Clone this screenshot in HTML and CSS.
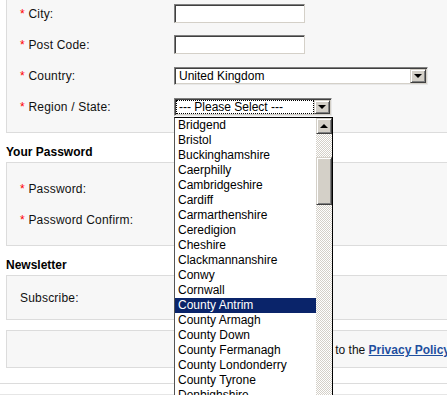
FILE: index.html
```html
<!DOCTYPE html>
<html lang="en">
<head>
    <meta charset="UTF-8">
    <title>Account Register</title>
    <link rel="stylesheet" href="styles.css">
</head>
<body>
    <div class="form">
        <!-- Address (top cut off) -->
        <div class="box box-first">
            <div class="row">
                <span class="label"><span class="req">*</span> City:</span>
                <input type="text" class="text">
            </div>
            <div class="row">
                <span class="label"><span class="req">*</span> Post Code:</span>
                <input type="text" class="text">
            </div>
            <div class="row">
                <span class="label"><span class="req">*</span> Country:</span>
                <div class="select select-wide">
                    <span class="value">United Kingdom</span>
                    <span class="arrow"><span class="tri-down"></span></span>
                </div>
            </div>
            <div class="row">
                <span class="label"><span class="req">*</span> Region / State:</span>
                <div class="select select-narrow">
                    <span class="value focused">--- Please Select ---</span>
                    <span class="arrow"><span class="tri-down"></span></span>

                    <div class="dropdown">
                        <ul class="options">
                            <li>Bridgend</li>
                            <li>Bristol</li>
                            <li>Buckinghamshire</li>
                            <li>Caerphilly</li>
                            <li>Cambridgeshire</li>
                            <li>Cardiff</li>
                            <li>Carmarthenshire</li>
                            <li>Ceredigion</li>
                            <li>Cheshire</li>
                            <li>Clackmannanshire</li>
                            <li>Conwy</li>
                            <li>Cornwall</li>
                            <li class="selected">County Antrim</li>
                            <li>County Armagh</li>
                            <li>County Down</li>
                            <li>County Fermanagh</li>
                            <li>County Londonderry</li>
                            <li>County Tyrone</li>
                            <li>Denbighshire</li>
                            <li>Derbyshire</li>
                        </ul>
                        <div class="scrollbar">
                            <span class="sb-btn"><span class="tri-up"></span></span>
                            <span class="sb-track sb-track-top"></span>
                            <span class="sb-thumb"></span>
                            <span class="sb-track sb-track-rest"></span>
                            <span class="sb-btn"><span class="tri-down"></span></span>
                        </div>
                    </div>
                </div>
            </div>
        </div>

        <h2>Your Password</h2>
        <div class="box box-pass">
            <div class="row">
                <span class="label"><span class="req">*</span> Password:</span>
                <input type="password" class="text">
            </div>
            <div class="row">
                <span class="label"><span class="req">*</span> Password Confirm:</span>
                <input type="password" class="text">
            </div>
        </div>

        <h2>Newsletter</h2>
        <div class="box box-news">
            <div class="row">
                <span class="label">Subscribe:</span>
            </div>
        </div>

        <div class="box box-agree">
            I have read and agree to the <a href="#" class="policy">Privacy Policy</a>
        </div>
    </div>

    <div class="buttons"></div>
</body>
</html>
```

FILE: styles.css
```css
/* Basic reset */
html {
    overflow: hidden;
}

body {
    margin: 0;
    background: #fff;
    font-family: 'Liberation Sans', Arial, sans-serif;
    font-size: 12px;
    color: #111;
}

.form {
    margin-left: 6px;
    width: 480px;
}

/* Grey field boxes */
.box {
    background: #f7f7f7;
    border: 1px solid #dcdcdc;
    padding: 10px 0 10px 13px;
}

.box-first {
    margin-top: -3px;
    padding-top: 0;
}

.box-news {
    padding-top: 6px;
    padding-bottom: 6px;
}

.box-agree {
    margin-top: 10px;
    padding: 12px 35px 10px 0;
    line-height: 14px;
    text-align: right;
    white-space: nowrap;
}

.policy {
    color: #1f4f9f;
    font-weight: bold;
    text-decoration: underline;
}

h2 {
    margin: 0;
    padding: 12px 0 3px;
    font-size: 12px;
    line-height: 14px;
    font-weight: bold;
    color: #000;
}

/* Rows */
.row {
    display: flex;
    align-items: center;
    height: 31px;
}

.label {
    width: 154px;
    flex-shrink: 0;
    letter-spacing: 0.2px;
}

.req {
    color: #f00;
}

/* Win2000 style inputs */
.text {
    box-sizing: border-box;
    width: 131px;
    height: 19px;
    margin: 0;
    padding: 0 2px;
    background: #fff;
    border: 1px solid;
    border-color: #7f7f7f #d4d0c8 #d4d0c8 #7f7f7f;
    box-shadow: inset 1px 1px 0 #404040;
    font: inherit;
}

.select {
    position: relative;
    box-sizing: border-box;
    height: 18px;
    display: flex;
    align-items: stretch;
    background: #fff;
    border: 1px solid;
    border-color: #7f7f7f #e8e8e8 #e8e8e8 #7f7f7f;
    box-shadow: inset 1px 1px 0 #404040, inset -1px -1px 0 #d4d0c8;
    padding: 1px 1px 1px 1px;
}

.select-wide {
    width: 254px;
}

.select-narrow {
    width: 158px;
}

.select .value {
    flex: 1;
    padding-left: 3px;
    line-height: 14px;
    color: #000;
}

.select .value.focused {
    padding-left: 2px;
    border: 1px dotted #000;
    line-height: 12px;
}

.select .arrow,
.sb-btn {
    box-sizing: border-box;
    width: 16px;
    display: flex;
    align-items: center;
    justify-content: center;
    background: #d4d0c8;
    border: 1px solid;
    border-color: #d4d0c8 #404040 #404040 #d4d0c8;
    box-shadow: inset 1px 1px 0 #fff, inset -1px -1px 0 #808080;
}

.tri-down {
    width: 0;
    height: 0;
    border-left: 4px solid transparent;
    border-right: 4px solid transparent;
    border-top: 4px solid #000;
}

.tri-up {
    width: 0;
    height: 0;
    border-left: 4px solid transparent;
    border-right: 4px solid transparent;
    border-bottom: 4px solid #000;
}

/* Opened region list */
.dropdown {
    position: absolute;
    left: -1px;
    top: 18px;
    width: 159px;
    height: 302px;
    box-sizing: border-box;
    display: flex;
    background: #fff;
    border: 1px solid #000;
    border-left-color: #555;
    z-index: 10;
}

.options {
    flex: 1;
    margin: 0;
    padding: 0;
    list-style: none;
}

.options li {
    height: 15px;
    line-height: 15px;
    padding-left: 3px;
    color: #000;
    white-space: nowrap;
}

.options li.selected {
    background: #0a246a;
    color: #fff;
}

.scrollbar {
    width: 16px;
    display: flex;
    flex-direction: column;
}

.sb-btn {
    height: 16px;
    flex-shrink: 0;
}

.sb-track {
    background: #fff repeating-conic-gradient(#d4d0c8 0 25%, #fff 0 50%) 0 0 / 2px 2px;
}

.sb-track-top {
    height: 23px;
}

.sb-track-rest {
    flex: 1;
}

.sb-thumb {
    height: 48px;
    box-sizing: border-box;
    background: #d4d0c8;
    border: 1px solid;
    border-color: #d4d0c8 #404040 #404040 #d4d0c8;
    box-shadow: inset 1px 1px 0 #fff, inset -1px -1px 0 #808080;
}

/* Button bar at the bottom */
.buttons {
    margin-top: 15px;
    height: 10px;
    border-top: 1px solid #dcdcdc;
    border-bottom: 1px solid #e6e6e6;
}
```
